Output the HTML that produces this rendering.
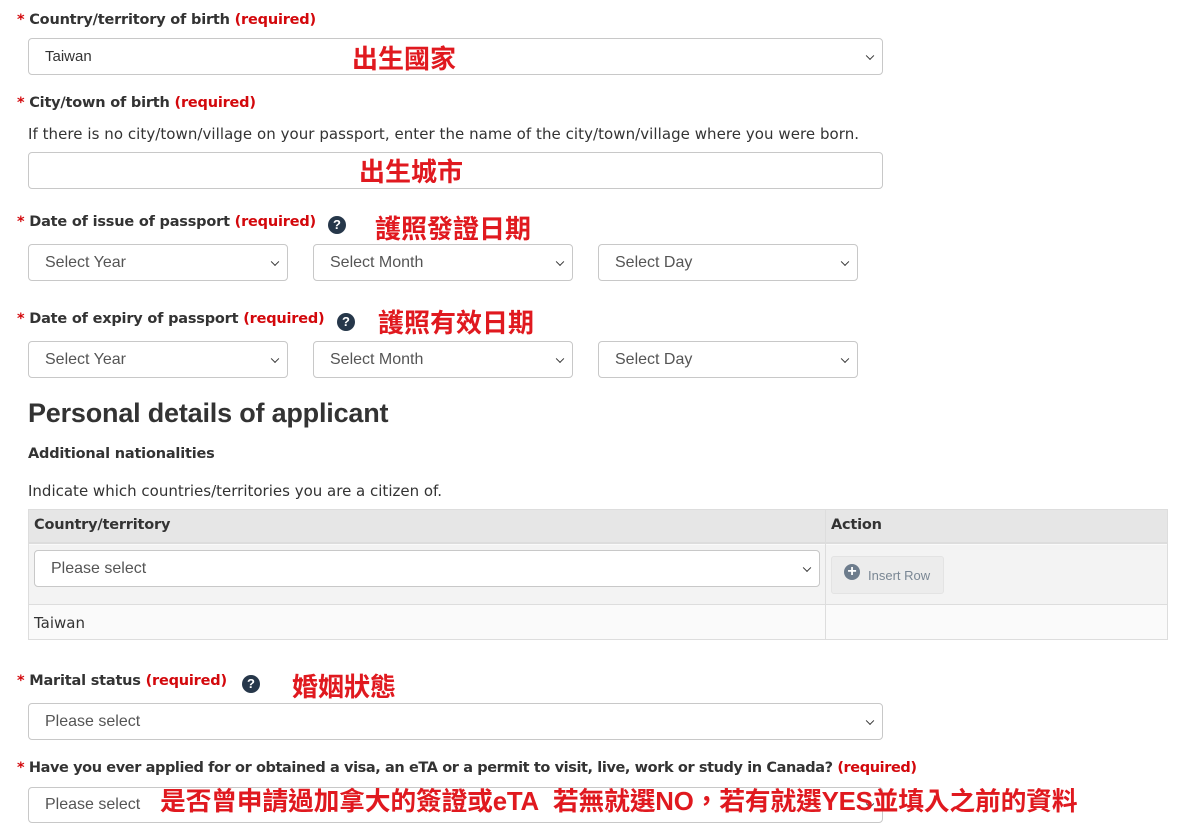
<!DOCTYPE html>
<html><head><meta charset="utf-8"><style>
*{box-sizing:border-box;margin:0;padding:0}
body{width:1185px;height:832px;background:#fff;position:relative;overflow:hidden;font-family:"Liberation Sans","Noto Sans CJK TC",sans-serif;color:#333}
.a{position:absolute;white-space:nowrap}
.lbl{font-size:14.5px;font-weight:bold;color:#333;font-family:"DejaVu Sans",sans-serif;letter-spacing:-0.2px}
.lbl .s,.lbl .r{color:#d3080c}
.sel{position:absolute;border:1px solid #c8c8c8;border-radius:4px;background:#fff;font-size:16px;color:#555;padding-left:16px;display:flex;align-items:center}
.sel:after{content:"";position:absolute;right:9px;top:50%;width:5px;height:5px;border-right:1.8px solid #333;border-bottom:1.8px solid #333;transform:translateY(-70%) rotate(45deg)}
.sel.nc:after{display:none}
.cjk{position:absolute;white-space:nowrap;color:#e0191f;font-weight:bold;font-family:"Noto Sans CJK TC",sans-serif;font-size:26px;line-height:1}
.q{display:inline-block;width:18px;height:18px;border-radius:50%;background:#26374a;color:#fff;font-size:13px;text-align:center;line-height:18px;font-weight:bold}
</style></head><body>
<div class="a lbl" style="left:17px;top:12px"><span class="s">*</span> Country/territory of birth <span class="r">(required)</span></div>
<div class="sel" style="left:28px;top:38px;width:855px;height:37px;font-size:15px;color:#333">Taiwan</div>
<div class="cjk" style="left:352px;top:45px">出生國家</div>

<div class="a lbl" style="left:17px;top:95px"><span class="s">*</span> City/town of birth <span class="r">(required)</span></div>
<div class="a" style="left:28px;top:125px;font-size:15px;color:#333;font-family:'DejaVu Sans',sans-serif;letter-spacing:0.05px">If there is no city/town/village on your passport, enter the name of the city/town/village where you were born.</div>
<div class="sel nc" style="left:28px;top:152px;width:855px;height:37px"></div>
<div class="cjk" style="left:359px;top:158px">出生城市</div>

<div class="a lbl" style="left:17px;top:214px"><span class="s">*</span> Date of issue of passport <span class="r">(required)</span></div>
<div class="a q" style="left:328px;top:216px">?</div>
<div class="cjk" style="left:375px;top:215px">護照發證日期</div>
<div class="sel" style="left:28px;top:244px;width:260px;height:37px">Select Year</div>
<div class="sel" style="left:313px;top:244px;width:260px;height:37px">Select Month</div>
<div class="sel" style="left:598px;top:244px;width:260px;height:37px">Select Day</div>

<div class="a lbl" style="left:17px;top:311px"><span class="s">*</span> Date of expiry of passport <span class="r">(required)</span></div>
<div class="a q" style="left:337px;top:313px">?</div>
<div class="cjk" style="left:378px;top:309px">護照有效日期</div>
<div class="sel" style="left:28px;top:341px;width:260px;height:37px">Select Year</div>
<div class="sel" style="left:313px;top:341px;width:260px;height:37px">Select Month</div>
<div class="sel" style="left:598px;top:341px;width:260px;height:37px">Select Day</div>

<div class="a" style="left:28px;top:398px;font-size:27px;font-weight:bold;color:#333;letter-spacing:-0.2px">Personal details of applicant</div>
<div class="a lbl" style="left:28px;top:446px">Additional nationalities</div>
<div class="a" style="left:28px;top:482px;font-size:15px;font-family:'DejaVu Sans',sans-serif">Indicate which countries/territories you are a citizen of.</div>

<div class="a" style="left:28px;top:509px;width:1140px;height:131px;border:1px solid #ddd;background:#fafafa"></div>
<div class="a" style="left:29px;top:510px;width:1138px;height:34px;background:#e6e6e6;border-bottom:2px solid #ddd"></div>
<div class="a" style="left:29px;top:545px;width:1138px;height:60px;background:#f3f3f3;border-bottom:1px solid #ddd"></div>
<div class="a" style="left:825px;top:510px;width:1px;height:130px;background:#ddd"></div>
<div class="a lbl" style="left:34px;top:517px">Country/territory</div>
<div class="a lbl" style="left:831px;top:517px">Action</div>
<div class="sel" style="left:34px;top:550px;width:786px;height:37px">Please select</div>
<div class="a" style="left:831px;top:556px;width:113px;height:38px;border:1px solid #e3e3e3;border-radius:3px;background:#ececec;font-size:13px;color:#7a8794;padding:11px 0 0 36px">Insert Row</div>
<div class="a" style="left:844px;top:564px;width:16px;height:16px;border-radius:50%;background:#6d7c8c;color:#fff;font-size:16px;font-weight:bold;line-height:16px;text-align:center">+</div>
<div class="a" style="left:34px;top:614px;font-family:'DejaVu Sans',sans-serif;font-size:15px">Taiwan</div>

<div class="a lbl" style="left:17px;top:673px"><span class="s">*</span> Marital status <span class="r">(required)</span></div>
<div class="a q" style="left:242px;top:675px">?</div>
<div class="cjk" style="left:292px;top:673px">婚姻狀態</div>
<div class="sel" style="left:28px;top:703px;width:855px;height:37px">Please select</div>

<div class="a lbl" style="left:17px;top:760px;letter-spacing:-0.4px"><span class="s">*</span> Have you ever applied for or obtained a visa, an eTA or a permit to visit, live, work or study in Canada? <span class="r">(required)</span></div>
<div class="sel" style="left:28px;top:787px;width:855px;height:36px">Please select</div>
<div class="cjk" style="left:160px;top:790px;font-size:25.8px;letter-spacing:-0.2px;font-family:'Liberation Sans','Noto Sans CJK TC',sans-serif">是否曾申請過加拿大的簽證或eTA&nbsp;&nbsp;若無就選NO，若有就選YES並填入之前的資料</div>
</body></html>
